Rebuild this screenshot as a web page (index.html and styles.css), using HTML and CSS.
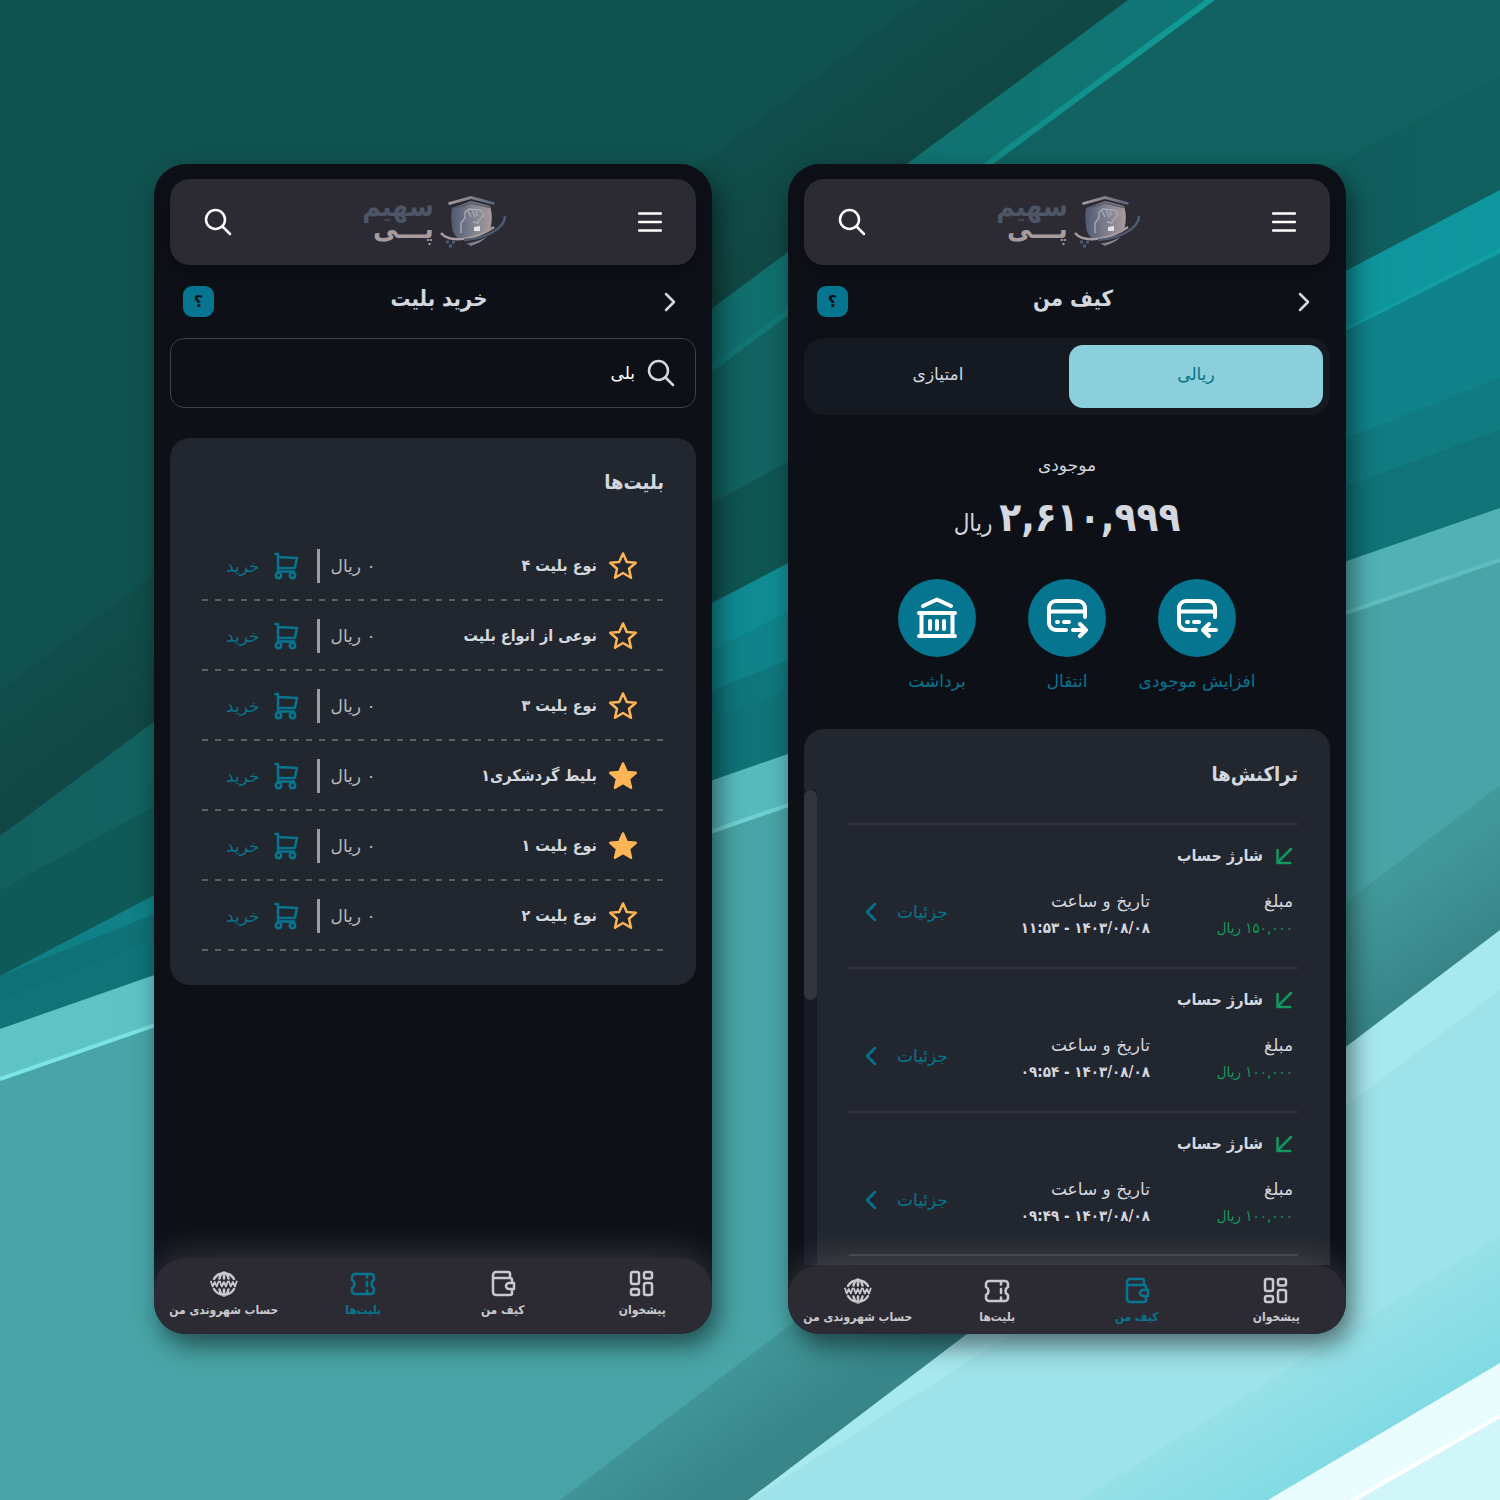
FILE: index.html
```html
<!DOCTYPE html>
<html lang="fa" dir="rtl">
<head>
<meta charset="utf-8">
<meta name="viewport" content="width=device-width, initial-scale=1">
<title>سهیم پی</title>
<link rel="stylesheet" href="styles.css">
</head>
<body>
<svg class="sprite" aria-hidden="true">
  <symbol id="i-search" viewBox="0 0 28 28"><circle cx="11.500" cy="11.500" r="9.500"/><path d="M18.500 18.500 26 26"/></symbol>
  <symbol id="i-menu" viewBox="0 0 24 24"><path d="M1 3.500h22M1 12h22M1 20.500h22"/></symbol>
  <symbol id="i-next" viewBox="0 0 12 20"><path d="M2 2l8 8-8 8"/></symbol>
  <symbol id="i-prev" viewBox="0 0 12 20"><path d="M10 2l-8 8 8 8"/></symbol>
  <symbol id="i-star" viewBox="0 0 30 30"><path d="M15 2.500l3.800 8.400 9 .9-6.800 6 2 9-8-4.800-8 4.800 2-9-6.800-6 9-.9z"/></symbol>
  <symbol id="i-cart" viewBox="0 0 25 28"><path d="M1.500 2h2.500v17.500M4 5l19 1-2.200 10H4M4 19.500h16"/><circle cx="4.500" cy="23.500" r="2.700"/><circle cx="18.500" cy="23.500" r="2.700"/></symbol>
  <symbol id="i-in" viewBox="0 0 18 18"><path d="M16 2 2.500 15.500M2.500 3v13H15"/></symbol>
  <symbol id="i-card-in" viewBox="0 0 42 42"><path d="M20 33H10a7 7 0 0 1-7-7V11a7 7 0 0 1 7-7h22a7 7 0 0 1 7 7v9M3 14.500h36M11 25h1M18 25h5M40 33H28M33 27l-6 6 6 6"/></symbol>
  <symbol id="i-card-out" viewBox="0 0 42 42"><path d="M20 33H10a7 7 0 0 1-7-7V11a7 7 0 0 1 7-7h22a7 7 0 0 1 7 7v9M3 14.500h36M11 25h1M18 25h5M27 33h12M34 27l6 6-6 6"/></symbol>
  <symbol id="i-bank" viewBox="0 0 42 42"><path d="M7 9l14-6.500L35 9M3 16h36M3 39h36M5.500 16v23M36.500 16v23M14 24v8M21 24v8M28 24v8"/></symbol>
  <symbol id="i-grid" viewBox="0 0 26 28"><rect x="2" y="2" width="8" height="12" rx="2"/><rect x="15" y="2" width="8" height="6.500" rx="2"/><rect x="15" y="13" width="8" height="12" rx="2"/><rect x="2" y="19" width="8" height="6" rx="2"/></symbol>
  <symbol id="i-wallet" viewBox="0 0 26 28"><path d="M20 8V4a2 2 0 0 0-2-2H6a3 3 0 0 0-3 3v17a3 3 0 0 0 3 3h14a2 2 0 0 0 2-2v-4M3 8h17a2 2 0 0 1 2 2v3M24 13h-5a3 3 0 0 0 0 6h5z"/></symbol>
  <symbol id="i-ticket" viewBox="0 0 28 28"><path d="M6 4h16a3 3 0 0 1 3 3v3a4.500 4.500 0 0 0 0 8v3a3 3 0 0 1-3 3H6a3 3 0 0 1-3-3v-3a4.500 4.500 0 0 0 0-8V7a3 3 0 0 1 3-3zM18 4v3.500M18 12v4M18 20.500V24"/></symbol>
  <symbol id="i-globe" viewBox="0 0 28 28"><path d="M4 9a11.500 11.500 0 0 1 20 0M4 19a11.500 11.500 0 0 0 20 0M9.500 8.500c1-4 2.500-6 4.500-6s3.500 2 4.500 6M14 2.500v6M9.500 19.500c1 4 2.500 6 4.500 6s3.500-2 4.500-6M14 19.500v6"/><path stroke-width="1.800" d="M1 11.500l1.700 5L4.800 12l2 4.500 1.700-5M10 11.500l1.700 5 2.200-4.500 2.100 4.500 1.700-5M19 11.500l1.700 5 2.200-4.500 2.100 4.500 1.700-5"/></symbol>
  <linearGradient id="g-shield"><stop offset="0" stop-color="#4f5a70"/><stop offset=".5" stop-color="#7d7f8d"/><stop offset="1" stop-color="#a79b9e"/></linearGradient>
  <linearGradient id="g-roof"><stop offset="0" stop-color="#a79b9e"/><stop offset="1" stop-color="#59647a"/></linearGradient>
  <symbol id="i-shield" viewBox="0 0 68 52">
    <path d="M8 6.500 31 0l24 6.500-1 2.500L31 3 9 9z" fill="url(#g-roof)"/>
    <path d="M12 12 31 5l19 5c3 9 2 19-1 27-3 6-8 9-18 13L20 44c-5-4-8-8-8-14-1-6-1-12 0-18z" fill="url(#g-shield)"/>
    <path d="M12 13.500 31 7l19 4.500" fill="none" stroke="#5b5a64" stroke-width="1.500"/>
    <path d="M21 37V27l4-5V16l4-3 12 1 3 5-5 5-1 3-5-1M28 15l3 6M32 14l3 7M36 14l1 6" fill="none" stroke="#a9adb8" stroke-width="1.300"/>
    <path d="M34 31l6-1v5h-6z" fill="#e4e3e6"/>
    <path d="M2 39c12 11 44 3 62-16-10 20-50 32-62 16z" fill="#2c2b34" stroke="#2c2b34" stroke-width="3"/>
    <path d="M1 37c9 11 36 6 53-6" fill="none" stroke="#a79b9e" stroke-width="2.500"/>
    <path d="M24 44c20-1 41-11 41-24" fill="none" stroke="#4f5a70" stroke-width="2.500"/>
    <path d="M6 46h3m3 0h3m-6 4h3" fill="none" stroke="#4f5a70" stroke-width="3"/>
  </symbol>
</svg>

<svg class="backdrop" viewBox="0 0 1500 1500" preserveAspectRatio="xMidYMid slice" aria-hidden="true">
  <defs>
    <linearGradient id="b-dark" gradientUnits="userSpaceOnUse" x1="450" y1="350" x2="550" y2="485"><stop offset="0" stop-color="#104e4b"/><stop offset="1" stop-color="#114441"/></linearGradient>
    <linearGradient id="b-ray"><stop offset="0" stop-color="#11605e"/><stop offset=".55" stop-color="#10706f"/><stop offset="1" stop-color="#107c7b"/></linearGradient>
    <linearGradient id="b-line"><stop offset=".3" stop-color="#11605e"/><stop offset="1" stop-color="#119c98"/></linearGradient>
    <linearGradient id="b-deep"><stop offset="0" stop-color="#0f5a57"/><stop offset=".5" stop-color="#0f5552"/><stop offset="1" stop-color="#115f60"/></linearGradient>
    <linearGradient id="b-cyan"><stop offset="0" stop-color="#107f86"/><stop offset="1" stop-color="#0f979f"/></linearGradient>
    <linearGradient id="b-sea"><stop offset="0" stop-color="#0f7075"/><stop offset="1" stop-color="#107c82"/></linearGradient>
    <linearGradient id="b-mint"><stop offset="0" stop-color="#5fc4c6"/><stop offset="1" stop-color="#50b0b4"/></linearGradient>
    <linearGradient id="b-edge"><stop offset="0" stop-color="#7ce6e4"/><stop offset="1" stop-color="#5fbcbe"/></linearGradient>
    <linearGradient id="b-shade" gradientUnits="userSpaceOnUse" x1="1050" y1="1120" x2="1110" y2="1205"><stop offset="0" stop-color="#42999b"/><stop offset="1" stop-color="#38868a"/></linearGradient>
    <linearGradient id="b-sky" gradientUnits="userSpaceOnUse" x1="1290" y1="1340" x2="1370" y2="1470"><stop offset="0" stop-color="#9be2e9"/><stop offset="1" stop-color="#7cd9e3"/></linearGradient>
  </defs>
  <path fill="#10524f" d="M0 0h1500v1500H0z"/>
  <path fill="url(#b-dark)" d="M919 0H1500V1500H0V690z"/>
  <path fill="url(#b-ray)" d="M1128 0H1500V1500H0V836z"/>
  <path fill="#116260" d="M1213 0H1500V1500H0V895z"/>
  <path fill="url(#b-line)" d="M1205 0h10L713 371 153 783v-4L713 364z"/>
  <path fill="url(#b-deep)" d="M1500 75V1500H0V890z"/>
  <path fill="url(#b-cyan)" d="M1500 190V1500H0V976z"/>
  <path fill="#10838a" d="M1500 252V1500H0V1010z"/>
  <path fill="#10a0a6" d="M1500 248v5L1200 404z"/>
  <path fill="url(#b-sea)" d="M1500 377V1500H0V976L713 690z"/>
  <path fill="#0f7378" d="M1500 430V1500H0V1000L788 690z"/>
  <path fill="url(#b-mint)" d="M1500 508V1500H0V1029L713 780z"/>
  <path fill="#48a4a6" d="M1500 560V1500H0V1080L713 832z"/>
  <path fill="none" stroke="url(#b-edge)" stroke-width="4" d="M1500 560 713 831 0 1079"/>
  <path fill="url(#b-shade)" d="M1500 785V1500H560z"/>
  <path fill="#a8e8ef" d="M1500 930V1500H748z"/>
  <path fill="#9ee3e9" d="M1500 990V1500H750L1200 1215z"/>
  <path fill="url(#b-sky)" d="M1500 1235V1500H1080z"/>
  <path fill="#eafdfe" d="M1500 1363V1500H1268z"/>
  <path fill="#d0f6fa" d="M1500 1418V1500H1355z"/>
  <path fill="none" stroke="#fff" stroke-width="4" d="M1500 1416 1350 1502"/>
</svg>

<main class="stage">
  <section class="phone" aria-label="کیف من">
    <header class="topbar">
      <button class="icon-btn" aria-label="منو"><svg class="icon icon-menu"><use href="#i-menu"/></svg></button>
      <a class="brand" href="#">
        <svg class="brand-mark" aria-hidden="true"><use href="#i-shield"/></svg>
        <span class="brand-name">سهیم<br><span class="brand-sub">پـــی</span></span>
      </a>
      <button class="icon-btn" aria-label="جستجو"><svg class="icon icon-search"><use href="#i-search"/></svg></button>
    </header>
    <div class="titlebar">
      <button class="icon-btn" aria-label="بازگشت"><svg class="icon icon-chevron"><use href="#i-next"/></svg></button>
      <h1 class="title">کیف من</h1>
      <button class="help" aria-label="راهنما">؟</button>
    </div>
    <div class="tabs" role="tablist">
      <button class="tab tab-active" role="tab" aria-selected="true">ریالی</button>
      <button class="tab" role="tab" aria-selected="false">امتیازی</button>
    </div>
    <div class="balance">
      <p class="balance-label">موجودی</p>
      <p class="balance-amount"><strong class="balance-number">۲,۶۱۰,۹۹۹</strong> <span>ریال</span></p>
    </div>
    <div class="actions">
      <button class="action"><span class="action-disc"><svg class="icon icon-action"><use href="#i-card-in"/></svg></span><span class="action-label">افزایش موجودی</span></button>
      <button class="action"><span class="action-disc"><svg class="icon icon-action"><use href="#i-card-out"/></svg></span><span class="action-label">انتقال</span></button>
      <button class="action"><span class="action-disc"><svg class="icon icon-action"><use href="#i-bank"/></svg></span><span class="action-label">برداشت</span></button>
    </div>
    <div class="card card-open">
      <h2 class="card-title card-title-tight">تراکنش‌ها</h2>
      <div class="scroller">
        <ul class="txns">
          <li class="txn">
            <h3 class="txn-title"><svg class="icon icon-in"><use href="#i-in"/></svg>شارژ حساب</h3>
            <div class="txn-body">
              <p class="field">مبلغ<span class="field-amount">۱۵۰,۰۰۰ ریال</span></p>
              <p class="field">تاریخ و ساعت<span class="field-date">۱۴۰۳/۰۸/۰۸ - ۱۱:۵۳</span></p>
              <a class="details" href="#">جزئیات<svg class="icon icon-chevron"><use href="#i-prev"/></svg></a>
            </div>
          </li>
          <li class="txn">
            <h3 class="txn-title"><svg class="icon icon-in"><use href="#i-in"/></svg>شارژ حساب</h3>
            <div class="txn-body">
              <p class="field">مبلغ<span class="field-amount">۱۰۰,۰۰۰ ریال</span></p>
              <p class="field">تاریخ و ساعت<span class="field-date">۱۴۰۳/۰۸/۰۸ - ۰۹:۵۴</span></p>
              <a class="details" href="#">جزئیات<svg class="icon icon-chevron"><use href="#i-prev"/></svg></a>
            </div>
          </li>
          <li class="txn">
            <h3 class="txn-title"><svg class="icon icon-in"><use href="#i-in"/></svg>شارژ حساب</h3>
            <div class="txn-body">
              <p class="field">مبلغ<span class="field-amount">۱۰۰,۰۰۰ ریال</span></p>
              <p class="field">تاریخ و ساعت<span class="field-date">۱۴۰۳/۰۸/۰۸ - ۰۹:۴۹</span></p>
              <a class="details" href="#">جزئیات<svg class="icon icon-chevron"><use href="#i-prev"/></svg></a>
            </div>
          </li>
        </ul>
        <div class="track" aria-hidden="true"><div class="thumb"></div></div>
      </div>
    </div>
    <nav class="nav nav-low">
      <a class="nav-item" href="#"><svg class="icon icon-nav"><use href="#i-grid"/></svg>پیشخوان</a>
      <a class="nav-item nav-current" href="#"><svg class="icon icon-nav"><use href="#i-wallet"/></svg>کیف من</a>
      <a class="nav-item" href="#"><svg class="icon icon-nav"><use href="#i-ticket"/></svg>بلیت‌ها</a>
      <a class="nav-item" href="#"><svg class="icon icon-nav"><use href="#i-globe"/></svg>حساب شهروندی من</a>
    </nav>
  </section>

  <section class="phone" aria-label="خرید بلیت">
    <header class="topbar">
      <button class="icon-btn" aria-label="منو"><svg class="icon icon-menu"><use href="#i-menu"/></svg></button>
      <a class="brand" href="#">
        <svg class="brand-mark" aria-hidden="true"><use href="#i-shield"/></svg>
        <span class="brand-name">سهیم<br><span class="brand-sub">پـــی</span></span>
      </a>
      <button class="icon-btn" aria-label="جستجو"><svg class="icon icon-search"><use href="#i-search"/></svg></button>
    </header>
    <div class="titlebar">
      <button class="icon-btn" aria-label="بازگشت"><svg class="icon icon-chevron"><use href="#i-next"/></svg></button>
      <h1 class="title">خرید بلیت</h1>
      <button class="help" aria-label="راهنما">؟</button>
    </div>
    <label class="searchbox">
      <svg class="icon icon-search" aria-hidden="true"><use href="#i-search"/></svg>
      <input class="search-input" type="text" value="بلی" aria-label="جستجوی بلیت">
    </label>
    <div class="card">
      <h2 class="card-title">بلیت‌ها</h2>
      <ul class="tickets">
        <li class="ticket"><svg class="icon icon-star"><use href="#i-star"/></svg><span class="ticket-name">نوع بلیت ۴</span><span class="ticket-price">۰ ریال</span><button class="buy"><svg class="icon icon-cart"><use href="#i-cart"/></svg>خرید</button></li>
        <li class="ticket"><svg class="icon icon-star"><use href="#i-star"/></svg><span class="ticket-name">نوعی از انواع بلیت</span><span class="ticket-price">۰ ریال</span><button class="buy"><svg class="icon icon-cart"><use href="#i-cart"/></svg>خرید</button></li>
        <li class="ticket"><svg class="icon icon-star"><use href="#i-star"/></svg><span class="ticket-name">نوع بلیت ۳</span><span class="ticket-price">۰ ریال</span><button class="buy"><svg class="icon icon-cart"><use href="#i-cart"/></svg>خرید</button></li>
        <li class="ticket"><svg class="icon icon-star starred"><use href="#i-star"/></svg><span class="ticket-name">بلیط گردشکری۱</span><span class="ticket-price">۰ ریال</span><button class="buy"><svg class="icon icon-cart"><use href="#i-cart"/></svg>خرید</button></li>
        <li class="ticket"><svg class="icon icon-star starred"><use href="#i-star"/></svg><span class="ticket-name">نوع بلیت ۱</span><span class="ticket-price">۰ ریال</span><button class="buy"><svg class="icon icon-cart"><use href="#i-cart"/></svg>خرید</button></li>
        <li class="ticket"><svg class="icon icon-star"><use href="#i-star"/></svg><span class="ticket-name">نوع بلیت ۲</span><span class="ticket-price">۰ ریال</span><button class="buy"><svg class="icon icon-cart"><use href="#i-cart"/></svg>خرید</button></li>
      </ul>
    </div>
    <nav class="nav">
      <a class="nav-item" href="#"><svg class="icon icon-nav"><use href="#i-grid"/></svg>پیشخوان</a>
      <a class="nav-item" href="#"><svg class="icon icon-nav"><use href="#i-wallet"/></svg>کیف من</a>
      <a class="nav-item nav-current" href="#"><svg class="icon icon-nav"><use href="#i-ticket"/></svg>بلیت‌ها</a>
      <a class="nav-item" href="#"><svg class="icon icon-nav"><use href="#i-globe"/></svg>حساب شهروندی من</a>
    </nav>
  </section>
</main>
</body>
</html>
```

FILE: styles.css
```css
:root {
  --bg: #0d1017;
  --bar: #2c2b34;
  --card: #22262e;
  --text: #d3d7df;
  --accent: #06758f;
  --green: #12995f;
  --condensed: "DejaVu Sans Condensed", "DejaVu Sans", sans-serif;
}

* { box-sizing: border-box; }

body {
  margin: 0;
  min-height: 100vh;
  position: relative;
  font-family: "DejaVu Sans", sans-serif;
  font-size: 17px;
  line-height: 24px;
  color: var(--text);
  background: #48a4a6;
}

h1, h2, h3, p, ul { margin: 0; padding: 0; }
h1, h2, h3 { font-family: var(--condensed); }
ul { list-style: none; }
a { color: inherit; text-decoration: none; }

button, input {
  font: inherit;
  color: inherit;
  background: none;
  border: 0;
  padding: 0;
}

button { cursor: pointer; }

.sprite { position: absolute; width: 0; height: 0; }

.backdrop {
  position: absolute;
  inset: 0;
  width: 100%;
  height: 100%;
  z-index: -1;
}

.stage {
  display: grid;
  grid-template-columns: repeat(auto-fit, minmax(480px, 1fr));
  gap: 76px;
  min-height: 100vh;
  padding: 164px 154px 166px;
}

.phone {
  display: flex;
  flex-direction: column;
  padding: 15px 16px 0;
  border-radius: 32px;
  background: var(--bg);
  box-shadow: 6px 12px 24px rgba(0, 0, 0, .5);
  overflow: hidden;
}

/* Icons */
.icon {
  display: block;
  flex: none;
  fill: none;
  stroke: currentColor;
  stroke-width: 2.5;
  stroke-linecap: round;
  stroke-linejoin: round;
}

.icon-search { width: 28px; height: 28px; }
.icon-menu { width: 24px; height: 24px; }
.icon-chevron { width: 12px; height: 20px; }
.icon-star { width: 30px; height: 30px; color: #ffb555; }
.icon-cart { width: 25px; height: 28px; }
.icon-in { width: 18px; height: 18px; color: var(--green); }
.icon-action { width: 42px; height: 42px; stroke-width: 4; }
.icon-nav { width: 28px; height: 28px; }
.starred { fill: currentColor; }

/* Header */
.topbar {
  display: flex;
  align-items: center;
  justify-content: space-between;
  height: 86px;
  padding: 0 34px;
  border-radius: 20px;
  background: var(--bar);
  color: #fff;
  box-shadow: 0 6px 16px rgba(0, 0, 0, .3);
}

.brand { display: flex; align-items: center; gap: 6px; }
.brand-mark { width: 68px; height: 52px; }

.brand-name {
  padding-bottom: 8px;
  font-family: var(--condensed);
  font-size: 28px;
  font-weight: 700;
  line-height: 22px;
  color: #4d5566;
}

.brand-sub { color: #a79b9e; }

.titlebar {
  display: flex;
  align-items: center;
  justify-content: space-between;
  height: 73px;
  padding: 0 20px 0 13px;
}

.title { font-size: 22px; line-height: 32px; padding-bottom: 6px; }

.help {
  width: 31px;
  height: 31px;
  border-radius: 9px;
  background: var(--accent);
  color: var(--bg);
  font-size: 16px;
  font-weight: 700;
}

/* Wallet */
.tabs {
  display: grid;
  grid-template-columns: 1fr 1fr;
  gap: 4px;
  height: 77px;
  padding: 7px;
  border-radius: 20px;
  background: #151a22;
}

.tab { border-radius: 14px; padding-bottom: 6px; }
.tab-active { background: #8acfdb; color: #0b7285; }

.balance { padding-top: 38px; text-align: center; }
.balance-amount { font-family: var(--condensed); font-size: 24px; line-height: 64px; padding-top: 8px; }
.balance-number { font-size: 40px; }

.actions {
  display: grid;
  grid-template-columns: repeat(3, 130px);
  justify-content: center;
  padding: 24px 0 36px;
}

.action { display: flex; flex-direction: column; align-items: center; gap: 12px; color: var(--accent); white-space: nowrap; }
.action-disc { display: grid; place-items: center; width: 78px; height: 78px; border-radius: 50%; background: var(--accent); color: #fff; }

.card { border-radius: 20px; background: var(--card); }
.card-open { border-radius: 20px 20px 0 0; }
.card-title { font-size: 20px; line-height: 28px; padding: 30px 32px 35px; }
.card-title-tight { padding: 31px 32px 2px; }

.scroller { display: flex; }
.txns { flex: 1; padding: 33px 32px 0; }
.txn { padding: 17px 5px 25px 0; border-top: 2px solid #31343d; }
.txn:last-child { padding-bottom: 24px; border-bottom: 2px solid #3c3e45; margin-bottom: 9px; }
.txn-title { display: flex; align-items: center; gap: 12px; font-size: 16px; line-height: 28px; }
.txn-body { display: grid; grid-template-columns: 143px 1fr auto; align-items: center; padding: 18px 0 0 16px; }
.field { display: flex; flex-direction: column; line-height: 27px; white-space: nowrap; }
.field-amount { font-family: var(--condensed); font-size: 15px; color: var(--green); }
.field-date { font-family: var(--condensed); font-size: 15px; font-weight: 700; }
.details { display: flex; align-items: center; gap: 20px; padding-bottom: 6px; color: var(--accent); }

.track { width: 13px; background: #151a24; }
.thumb { height: 210px; border-radius: 8px; background: #31353e; }

/* Tickets */
.searchbox {
  display: flex;
  align-items: center;
  gap: 12px;
  height: 70px;
  margin-bottom: 30px;
  padding: 0 20px;
  border: 1px solid #3f4147;
  border-radius: 14px;
}

.search-input { flex: 1; min-width: 0; color: #fff; outline: 0; }

.tickets { padding: 0 32px 34px; }

.ticket {
  display: flex;
  align-items: center;
  height: 70px;
  padding: 0 26px 0 24px;
  background: repeating-linear-gradient(to right, #5c6067 0 6px, transparent 6px 13px) bottom / 100% 2px no-repeat;
}

.ticket-name { flex: 1; padding-right: 11px; font-family: var(--condensed); font-size: 16px; font-weight: 700; }
.ticket-price { padding: 5px 0 5px 11px; border-left: 3px solid #9b9da1; color: #b7babf; }
.buy { display: flex; align-items: center; gap: 14px; padding-right: 18px; color: var(--accent); }

/* Bottom navigation */
.nav {
  display: grid;
  grid-template-columns: repeat(4, 1fr);
  margin: auto -16px 0;
  padding: 12px 0;
  position: relative;
  border-radius: 32px 32px 0 0;
  background: var(--bar);
  box-shadow: 0 0 40px rgba(255, 255, 255, .2);
  color: #c9c9cd;
}

.nav-low { padding-bottom: 5px; }

.nav-item {
  display: flex;
  flex-direction: column;
  align-items: center;
  font-family: var(--condensed);
  font-size: 12px;
  font-weight: 700;
  white-space: nowrap;
}

.nav-current { color: var(--accent); }
```
